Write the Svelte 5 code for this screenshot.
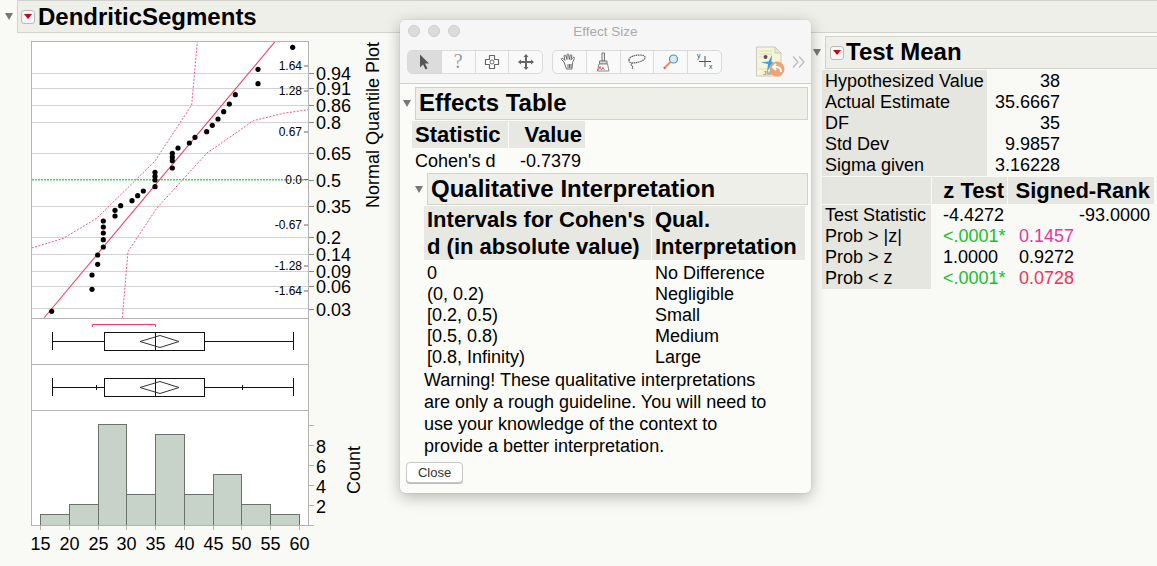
<script>
	// y values for the plot gridlines and the two axis scales
	const grid = [73.5, 88.5, 105.5, 122.5, 153.5, 206.5, 237.5, 254.5, 271.5, 286.5, 308.5];
	const quantiles = [
		['0.94', 73], ['0.91', 88], ['0.86', 105], ['0.8', 122], ['0.65', 153], ['0.5', 180],
		['0.35', 206], ['0.2', 237], ['0.14', 254], ['0.09', 271], ['0.06', 286], ['0.03', 309]
	];
	const normal = [
		['1.64', 66], ['1.28', 91], ['0.67', 132], ['0.0', 179.5], ['-0.67', 225], ['-1.28', 266], ['-1.64', 291]
	];
	const points = [
		[878, 142], [774, 208], [774, 251], [706, 284], [688, 312], [671, 335], [654, 357], [637, 376],
		[620, 395], [585, 412], [568, 429], [534, 444], [517, 460], [517, 471], [517, 482], [517, 504],
		[465, 517], [465, 529], [465, 540], [465, 560], [430, 573], [413, 587], [396, 602], [362, 617],
		[345, 631], [345, 648], [310, 663], [310, 681], [310, 699], [310, 719], [310, 741], [293, 765],
		[293, 793], [276, 825], [276, 868], [155, 934]
	].map(([x, y]) => [x / 3, y / 3]);

	const scale = (list) => list.map(([x, y]) => `${x / 3},${y / 3}`).join(' ');
	const upper = scale([[95, 744], [190, 715], [290, 655], [465, 483], [575, 315], [592, 125]]);
	const lower = scale([[367, 953], [384, 755], [470, 625], [620, 460], [760, 362], [850, 340], [925, 329]]);

	const edges = [40.5, 69.5, 98.5, 126.5, 155.5, 184.5, 213.5, 241.5, 270.5, 299.5];
	const tops = [514.5, 504.5, 424.5, 494.5, 434.5, 494.5, 474.5, 504.5, 514.5];
	const xLabels = [15, 20, 25, 30, 35, 40, 45, 50, 55, 60];
	const yTicks = [425, 445, 465, 485, 505, 525];

	const intervals = [
		['0', 'No Difference'],
		['(0, 0.2)', 'Negligible'],
		['[0.2, 0.5)', 'Small'],
		['[0.5, 0.8)', 'Medium'],
		['[0.8, Infinity)', 'Large']
	];
	const summary = [
		['Hypothesized Value', '38'],
		['Actual Estimate', '35.6667'],
		['DF', '35'],
		['Std Dev', '9.9857'],
		['Sigma given', '3.16228']
	];
</script>

{#snippet redButton()}
	<span class="menu-btn"><span class="menu-arrow"></span></span>
{/snippet}

{#snippet boxPlot(y, shortHair)}
	<g fill="none" stroke="#111" stroke-width="1">
		<path d="M52.5 {y - 9}v18M293.5 {y - 9}v18M52.5 {y + 0.5}H104.5M204.5 {y + 0.5}H293.5" />
		<rect x="104.5" y={y - 9 + 0.5} width="100" height="18" />
		<path d="M155.5 {y - 9}v18" />
		<path d="M140 {y + 0.5}L160 {y - 5.5}L179 {y + 0.5}L160 {y + 6.5}Z" stroke="#333" />
		{#if shortHair}
			<path d="M96.5 {y - 2}v5M242.5 {y - 2}v5" />
		{/if}
	</g>
{/snippet}

<div class="page">
	<div class="outline-row">
		<span class="disclosure"></span>
		<div class="outline-head main-head">
			{@render redButton()}
			<span>DendriticSegments</span>
		</div>
	</div>

	<div class="body">
		<svg class="plots" width="400" height="533" viewBox="0 33 400 533">
			<rect x="31.5" y="41.5" width="277" height="484" fill="#fff" />

			{#each grid as y}
				<line x1="32" x2="308" y1={y} y2={y} stroke="#d2d2d2" />
			{/each}
			<line class="zero" x1="32" x2="308" y1="179.800" y2="179.800" />

			<polyline points={upper} fill="none" stroke="#f2557a" stroke-dasharray="2 1.5" />
			<polyline points={lower} fill="none" stroke="#f2557a" stroke-dasharray="2 1.5" />
			<line x1="44" y1="318" x2="275" y2="41.7" stroke="#ee4466" stroke-width="1.1" />

			{#each points as [x, y]}
				<circle cx={x} cy={y} r="2.6" fill="#000" />
			{/each}

			{#each normal as [label, y]}
				<text class="small" x="302" y={y + 4} text-anchor="end">{label}</text>
				<line x1="304" x2="308" y1={y} y2={y} stroke="#666" />
			{/each}
			{#each quantiles as [label, y]}
				<line x1="308" x2="314" y1={y + 0.5} y2={y + 0.5} stroke="#888" />
				<text class="axis" x="316" y={y + 6.5}>{label}</text>
			{/each}
			<text class="axis" transform="translate(379 125) rotate(-90)" text-anchor="middle">Normal Quantile Plot</text>

			<path d="M92.5 327v-2.5H155.5v2.5" fill="none" stroke="#f0365c" />
			{@render boxPlot(341, false)}
			{@render boxPlot(387, true)}

			{#each tops as top, i}
				<rect x={edges[i]} y={top} width={edges[i + 1] - edges[i]} height={525.5 - top} fill="#c7d3c9" stroke="#6a726b" />
			{/each}

			<g stroke="#b3b3b3" fill="none">
				<rect x="31.5" y="41.5" width="277" height="484" />
				<path d="M32 318.5H308M32 364.5H308M32 410.5H308" />
				<path d="M40.5 525v5M69.5 525v5M98.5 525v5M126.5 525v5M155.5 525v5M184.5 525v5M213.5 525v5M241.5 525v5M270.5 525v5M299.5 525v5" />
				{#each yTicks as y}
					<line x1="308" x2="314" y1={y + 0.5} y2={y + 0.5} />
				{/each}
			</g>

			{#each [8, 6, 4, 2] as n, i}
				<text class="axis" x="316" y={452.5 + i * 20}>{n}</text>
			{/each}
			{#each xLabels as n, i}
				<text class="axis" x={edges[i]} y="549.5" text-anchor="middle">{n}</text>
			{/each}
			<text class="axis" transform="translate(360 470) rotate(-90)" text-anchor="middle">Count</text>
		</svg>

		<section class="test-mean">
			<div class="outline-row">
				<span class="disclosure"></span>
				<div class="outline-head">
					{@render redButton()}
					<span>Test Mean</span>
				</div>
			</div>
			<table class="summary">
				<tbody>
					{#each summary as [name, value]}
						<tr>
							<th>{name}</th>
							<td>{value}</td>
						</tr>
					{/each}
				</tbody>
			</table>
			<table class="tests">
				<thead>
					<tr>
						<th></th>
						<th class="num">z Test</th>
						<th class="num">Signed-Rank</th>
					</tr>
				</thead>
				<tbody>
					<tr><th>Test Statistic</th><td>-4.4272</td><td class="right">-93.0000</td></tr>
					<tr><th>Prob &gt; |z|</th><td class="green">&lt;.0001*</td><td class="pink">0.1457</td></tr>
					<tr><th>Prob &gt; z</th><td>1.0000</td><td>0.9272</td></tr>
					<tr><th>Prob &lt; z</th><td class="green">&lt;.0001*</td><td class="red">0.0728</td></tr>
				</tbody>
			</table>
		</section>
	</div>

	<div class="window">
		<div class="titlebar">
			<span class="lights"><i></i><i></i><i></i></span>
			<span class="title">Effect Size</span>
		</div>
		<div class="toolbar">
			<div class="tool-group first">
				<span class="tool selected">
					<svg width="16" height="18" viewBox="0 0 16 18"><path d="M4 1.5V14.5L7 11.5L9.5 16.5L11.5 15.5L9 10.5H13Z" fill="#555" /></svg>
				</span>
				<span class="tool help">?</span>
				<span class="tool">
					<svg width="18" height="18" viewBox="0 0 18 18"><path d="M6.5 2.5H11.5V6.5H15.5V11.5H11.5V15.5H6.5V11.5H2.5V6.5H6.5Z" fill="#fff" stroke="#666" stroke-width="1.2" stroke-linejoin="round" /><circle cx="9" cy="9" r="2" fill="#fff" stroke="#666" /></svg>
				</span>
				<span class="tool">
					<svg width="18" height="18" viewBox="0 0 18 18"><path d="M9 1L11.5 4H10V8H14V6.5L17 9L14 11.500V10H10V14H11.500L9 17L6.500 14H8V10H4V11.500L1 9L4 6.500V8H8V4H6.500Z" fill="#666" /></svg>
				</span>
			</div>
			<div class="tool-group second">
				<span class="tool">
					<svg width="18" height="18" viewBox="0 0 18 18" fill="none" stroke="#666"><path d="M4 9L1.500 6.500C1 5.500 2 5 3 5.500L5 7.500L4 3C4 2 5.500 2 5.800 3L7 6.500V1.800C7 .8 8.600 .8 8.700 1.800L9.300 6.500L10.300 2.300C10.600 1.300 12 1.600 11.800 2.800L11 7L13 4.500C13.800 3.800 14.800 4.500 14.300 5.500L12.500 9.500L12 16H6.500Z" fill="#fff" /><path d="M8 11V15M9.500 11V15M11 11V15" /></svg>
				</span>
				<span class="tool">
					<svg width="18" height="20" viewBox="0 0 18 20" fill="none"><path d="M8 1H10.500V9H8Z" fill="#eee" stroke="#777" /><path d="M5.500 9H13V12H5.500Z" fill="#ddd" stroke="#777" /><path d="M5 12H13.500L15 19H3.500Z" fill="#fff" stroke="#888" /><path d="M4.500 18L6 14.500L7.500 18L9 15.500L10.500 18" stroke="#e2506a" /></svg>
				</span>
				<span class="tool">
					<svg width="20" height="18" viewBox="0 0 20 18" fill="none" stroke="#555"><path d="M2 7C2 3.500 8 2 13 2C17 2 18.500 3.500 18 5C17 8 10 10 5.500 10C3 10 2 9 2 7Z" stroke-dasharray="1.500 .7" stroke-width="1.200" /><path d="M5.500 10C3.500 11 4 13 5.500 13C6 14 5 15.500 5.500 16" /></svg>
				</span>
				<span class="tool">
					<svg width="18" height="18" viewBox="0 0 18 18" fill="none"><circle cx="11.500" cy="6" r="4" fill="#d4eef4" stroke="#5a93a6" stroke-width="1.200" /><path d="M8.500 9L2 15.500" stroke="#e98a5a" stroke-width="2" /><path d="M3 14.500L2 15.500" stroke="#e2506a" stroke-width="2" /></svg>
				</span>
				<span class="tool">
					<svg width="18" height="18" viewBox="0 0 18 18" fill="none" stroke="#555"><path d="M9 3V14M3 8.500H15" /><text class="tiny" x="1" y="5">y</text><text class="tiny" x="13" y="16">x</text></svg>
				</span>
			</div>
			<svg class="jmp-icon" width="32" height="32" viewBox="0 0 32 32">
				<path d="M2.500 1H21L27 7V30H2.500Z" fill="#f7f5d8" stroke="#c9c9c0" />
				<path d="M21 1V7H27Z" fill="#e8e8e0" stroke="#c9c9c0" />
				<path d="M5 5H18M5 8H18M5 11H8M5 23H14" stroke="#dcdcb8" />
				<circle cx="11.500" cy="11" r="2" fill="#555" />
				<path d="M18 9L14.500 15.500L7 16.500L14 18L13 26L17 19L22 19L17.500 15.500Z" fill="#3e9ee0" />
				<text class="jmp-text" x="9" y="28.500">JMP</text>
				<circle cx="23" cy="23" r="7.500" fill="#eda577" />
				<path d="M27 26C27 21.500 24 20.500 20 21M22 18L19 21L22 24" fill="none" stroke="#fff" stroke-width="1.800" />
			</svg>
			<svg class="more" width="13" height="14" viewBox="0 0 13 14" fill="none" stroke="#bbb" stroke-width="1.200">
				<path d="M1 1.500L6 7L1 12.500M7 1.500L12 7L7 12.500" />
			</svg>
		</div>

		<div class="content">
			<div class="outline-row effects">
				<span class="disclosure"></span>
				<div class="outline-head inner">Effects Table</div>
			</div>
			<table class="stat">
				<thead>
					<tr><th>Statistic</th><th class="num">Value</th></tr>
				</thead>
				<tbody>
					<tr><td>Cohen's d</td><td class="num">-0.7379</td></tr>
				</tbody>
			</table>
			<div class="outline-row qual">
				<span class="disclosure"></span>
				<div class="outline-head inner">Qualitative Interpretation</div>
			</div>
			<table class="intervals">
				<thead>
					<tr>
						<th>Intervals for Cohen's d (in absolute value)</th>
						<th>Qual. Interpretation</th>
					</tr>
				</thead>
				<tbody>
					{#each intervals as [range, meaning]}
						<tr><td>{range}</td><td>{meaning}</td></tr>
					{/each}
				</tbody>
			</table>
			<p class="warning">Warning! These qualitative interpretations are only a rough guideline. You will need to use your knowledge of the context to provide a better interpretation.</p>
			<button class="close">Close</button>
		</div>
	</div>
</div>

<style>
	:global(body) {
		margin: 0;
		background: #f9f9f5;
		font-family: "Liberation Sans", Arial, sans-serif;
		color: #000;
	}

	.page {
		position: relative;
		width: 1157px;
		height: 566px;
		overflow: hidden;
		font-size: 18px;
	}

	.outline-row {
		display: flex;
		align-items: center;
	}

	.disclosure {
		width: 0;
		height: 0;
		border-left: 4.5px solid transparent;
		border-right: 4.5px solid transparent;
		border-top: 7px solid #777;
	}

	.outline-head {
		display: flex;
		align-items: center;
		box-sizing: border-box;
		flex: 1;
		height: 33px;
		background: #efefea;
		border: 1px solid #d2d2cc;
		border-right: 0;
		font-size: 24px;
		font-weight: bold;
		line-height: 1;
		white-space: nowrap;
	}

	.main-head {
		margin-left: 4px;
		padding-left: 3px;
	}

	.page > .outline-row {
		padding-left: 5px;
	}

	.menu-btn {
		display: flex;
		align-items: center;
		justify-content: center;
		box-sizing: border-box;
		width: 14px;
		height: 14px;
		margin-right: 3px;
		background: #f6f6f6;
		border: 1px solid #bbb;
		border-radius: 3px;
	}

	.menu-arrow {
		width: 0;
		height: 0;
		border-left: 4px solid transparent;
		border-right: 4px solid transparent;
		border-top: 5px solid #d0021b;
	}

	.body {
		display: flex;
		justify-content: space-between;
	}

	.plots {
		display: block;
	}

	.plots text {
		font-family: "Liberation Sans", Arial, sans-serif;
		fill: #000;
	}

	.plots .axis {
		font-size: 18px;
	}

	.plots .small {
		font-size: 12px;
	}

	.plots .zero {
		stroke: #3ddc58;
		stroke-width: 1.6px;
		stroke-dasharray: 2 1;
	}

	.test-mean {
		width: 345px;
		padding-top: 3px;
	}

	.test-mean .outline-row {
		padding-left: 1px;
	}

	.test-mean .outline-head {
		margin-left: 4px;
		padding-left: 4px;
		padding-bottom: 1px;
		height: 33px;
	}

	.test-mean .outline-head .menu-btn {
		margin-right: 2px;
		margin-top: 1px;
	}

	table {
		border-collapse: separate;
		border-spacing: 0;
		font-size: 18px;
		line-height: 21px;
	}

	th,
	td {
		padding: 0;
		font-weight: normal;
		text-align: left;
		white-space: nowrap;
	}

	.summary {
		margin: 1px 0 0 10px;
	}

	.summary th {
		width: 162px;
		padding-left: 3px;
		padding-top: 1px;
		background: #e6e6e0;
	}

	.summary tr + tr th {
		padding-top: 0;
	}

	.summary td {
		width: 73px;
		text-align: right;
	}

	.tests {
		margin: 1px 0 0 10px;
	}

	.tests th {
		width: 106px;
		padding-left: 3px;
		background: #e6e6e0;
	}

	.tests thead th {
		height: 27px;
		font-size: 22px;
		font-weight: bold;
		border-bottom: 1px solid #f9f9f5;
	}

	.tests thead th.num {
		text-align: right;
		padding: 0 3px 0 0;
		border-left: 1px solid #f9f9f5;
	}

	.tests thead th:nth-child(2) {
		width: 72px;
		padding-right: 3px;
	}

	.tests thead th:nth-child(3) {
		width: 142px;
		padding-right: 4px;
	}

	.tests tbody th:first-child {
		padding-top: 0;
	}

	.tests td {
		padding-left: 12px;
	}

	.tests .right {
		padding-right: 4px;
		text-align: right;
	}

	.green {
		color: #17bf2b;
	}

	.pink {
		color: #e835a0;
	}

	.red {
		color: #f4305a;
	}

	.window {
		position: absolute;
		left: 400px;
		top: 20px;
		box-sizing: border-box;
		width: 411px;
		height: 473px;
		background: #fbfbf7;
		border-radius: 5px;
		box-shadow: 0 4px 16px rgba(0, 0, 0, 0.28), 0 0 1px rgba(0, 0, 0, 0.35);
		overflow: hidden;
	}

	.titlebar {
		display: flex;
		justify-content: center;
		align-items: center;
		position: relative;
		height: 23px;
		background: #f6f6f6;
	}

	.lights {
		position: absolute;
		left: 8px;
		top: 5px;
		display: flex;
		gap: 8px;
	}

	.lights i {
		width: 12px;
		height: 12px;
		border-radius: 50%;
		background: #dcdcdc;
		border: 0.5px solid #ccc;
		box-sizing: border-box;
	}

	.title {
		font-size: 13.5px;
		color: #aaa;
	}

	.toolbar {
		display: flex;
		align-items: center;
		box-sizing: border-box;
		height: 41px;
		padding: 0 0 3px 7px;
		background: #f6f6f6;
		border-bottom: 1px solid #cfcfcf;
	}

	.tool-group {
		display: flex;
		box-sizing: border-box;
		height: 24px;
		background: #f9f9f9;
		border: 1px solid #dadada;
		border-radius: 5px;
		overflow: hidden;
	}

	.tool-group.first {
		width: 136px;
	}

	.tool-group.second {
		width: 170px;
		margin-left: 9px;
	}

	.tool {
		display: flex;
		flex: 1;
		align-items: center;
		justify-content: center;
		border-left: 1px solid #dadada;
	}

	.tool:first-child {
		border-left: 0;
	}

	.selected {
		background: #dcdcdc;
	}

	.help {
		font-family: "Liberation Serif", serif;
		font-size: 20px;
		color: #999;
	}

	.tiny {
		font-size: 7px;
		font-family: "Liberation Sans", sans-serif;
		stroke: none;
		fill: #444;
	}

	.jmp-text {
		font-size: 6px;
		font-family: "Liberation Sans", sans-serif;
		font-weight: bold;
		fill: #999;
	}

	.jmp-icon {
		margin-left: 32px;
	}

	.more {
		margin-left: 6px;
	}

	.content {
		padding-top: 3px;
	}

	.outline-row.effects {
		padding: 0 3px;
	}

	.outline-row.effects .inner {
		margin-left: 4px;
	}

	.inner {
		padding: 0 0 2px 3px;
		border-right: 1px solid #d2d2cc;
	}

	.stat {
		margin-left: 12px;
		margin-top: 1px;
	}

	.stat th {
		height: 27px;
		padding: 0 3px;
		font-size: 22px;
		font-weight: bold;
		background: #e8e8e2;
	}

	.stat th:first-child {
		width: 90px;
	}

	.stat th + th {
		border-left: 1px solid #fbfbf7;
		width: 70px;
	}

	.stat td {
		padding: 3px 3px 2px;
		line-height: 21px;
	}

	.stat .num {
		text-align: right;
	}

	.stat td.num {
		padding-right: 4px;
	}

	.outline-row.qual {
		padding: 0 3px 0 15px;
		margin-top: -1px;
	}

	.outline-row.qual .inner {
		margin-left: 4px;
		height: 32px;
		padding-bottom: 0;
	}

	.intervals {
		margin: 1px 0 0 24px;
		table-layout: fixed;
		width: 381px;
	}

	.intervals th {
		padding: 0 3px;
		font-size: 22px;
		font-weight: bold;
		line-height: 27px;
		white-space: normal;
		background: #e8e8e2;
		border-bottom: 3px solid #fbfbf7;
	}

	.intervals th:first-child {
		width: 228px;
		box-sizing: border-box;
		border-right: 1px solid #fbfbf7;
	}

	.intervals td {
		padding: 0 3px;
	}

	.warning {
		width: 345px;
		margin: 1px 0 0 24px;
		line-height: 22px;
	}

	.close {
		display: block;
		width: 57px;
		height: 21px;
		margin: 5px 0 0 6px;
		padding: 0;
		font-family: inherit;
		font-size: 13px;
		color: #333;
		background: #fff;
		border: 1px solid #c8c8c8;
		border-radius: 4px;
		box-shadow: 0 1px 0 #bbb;
	}
</style>
